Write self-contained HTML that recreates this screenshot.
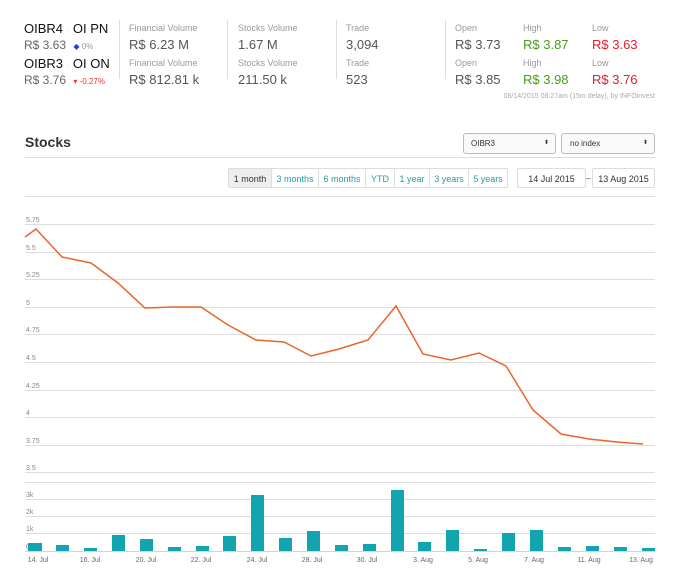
<!DOCTYPE html>
<html><head><style>
body{margin:0;background:#fff;width:673px;height:578px;overflow:hidden;font-family:"Liberation Sans",sans-serif;position:relative}
.a{position:absolute;white-space:nowrap}
.lb{font-size:9px;color:#999}
.v{font-size:13px;color:#555}
.dv{position:absolute;width:1px;background:#ddd;top:20px;height:59px}
.btn{position:absolute;top:168px;height:20px;border:1px solid #ddd;font-size:9px;color:#2a9aa8;line-height:20px;text-align:center;box-sizing:border-box}
</style></head><body>
<div class="a" style="left:24px;top:21px;font-size:13px;color:#111">OIBR4 <span style="color:#bbb;font-size:8px">·</span> OI PN</div>
<div class="a" style="left:24px;top:38px;font-size:12px;color:#666">R$ 3.63 <span style="font-size:8px;color:#999;margin-left:4px"><span style="color:#1a44e0">◆</span> 0%</span></div>
<div class="a" style="left:24px;top:56px;font-size:13px;color:#111">OIBR3 <span style="color:#bbb;font-size:8px">·</span> OI ON</div>
<div class="a" style="left:24px;top:73px;font-size:12px;color:#666">R$ 3.76 <span style="font-size:8px;color:#e33;margin-left:4px">▾ -0.27%</span></div>
<div class="dv" style="left:119px"></div><div class="dv" style="left:227px"></div><div class="dv" style="left:336px"></div><div class="dv" style="left:445px"></div>
<div class="a lb" style="left:129px;top:23px">Financial Volume</div><div class="a v" style="left:129px;top:37px">R$ 6.23 M</div>
<div class="a lb" style="left:129px;top:58px">Financial Volume</div><div class="a v" style="left:129px;top:72px">R$ 812.81 k</div>
<div class="a lb" style="left:238px;top:23px">Stocks Volume</div><div class="a v" style="left:238px;top:37px">1.67 M</div>
<div class="a lb" style="left:238px;top:58px">Stocks Volume</div><div class="a v" style="left:238px;top:72px">211.50 k</div>
<div class="a lb" style="left:346px;top:23px">Trade</div><div class="a v" style="left:346px;top:37px">3,094</div>
<div class="a lb" style="left:346px;top:58px">Trade</div><div class="a v" style="left:346px;top:72px">523</div>
<div class="a lb" style="left:455px;top:23px">Open</div><div class="a v" style="left:455px;top:37px">R$ 3.73</div>
<div class="a lb" style="left:455px;top:58px">Open</div><div class="a v" style="left:455px;top:72px">R$ 3.85</div>
<div class="a lb" style="left:523px;top:23px">High</div><div class="a v" style="left:523px;top:37px;color:#4a9a1e">R$ 3.87</div>
<div class="a lb" style="left:523px;top:58px">High</div><div class="a v" style="left:523px;top:72px;color:#4a9a1e">R$ 3.98</div>
<div class="a lb" style="left:592px;top:23px">Low</div><div class="a v" style="left:592px;top:37px;color:#e0202a">R$ 3.63</div>
<div class="a lb" style="left:592px;top:58px">Low</div><div class="a v" style="left:592px;top:72px;color:#e0202a">R$ 3.76</div>
<div class="a" style="right:18px;top:93px;font-size:7px;color:#aaa">08/14/2015 08:27am (15m delay), by INFOinvest</div>
<div class="a" style="left:25px;top:134px;font-size:14px;font-weight:bold;color:#333">Stocks</div>
<div class="a" style="left:463px;top:133px;width:93px;height:21px;border:1px solid #bbb;border-radius:3px;box-sizing:border-box;font-size:8px;color:#333;line-height:19px;padding-left:7px;background:#fafafa">OIBR3<span style="position:absolute;right:6px;font-size:6px">⬍</span></div>
<div class="a" style="left:561px;top:133px;width:94px;height:21px;border:1px solid #bbb;border-radius:3px;box-sizing:border-box;font-size:8px;color:#333;line-height:19px;padding-left:8px;background:#fafafa">no index<span style="position:absolute;right:6px;font-size:6px">⬍</span></div>
<div class="a" style="left:25px;top:157px;width:630px;height:1px;background:#ddd"></div>
<div class="a" style="left:25px;top:196px;width:630px;height:1px;background:#ddd"></div>
<div class="btn" style="left:228px;width:44px;background:#eee;color:#333;border-radius:2px 0 0 2px">1 month</div>
<div class="btn" style="left:271px;width:48px">3 months</div>
<div class="btn" style="left:318px;width:48px">6 months</div>
<div class="btn" style="left:365px;width:30px">YTD</div>
<div class="btn" style="left:394px;width:36px">1 year</div>
<div class="btn" style="left:429px;width:40px">3 years</div>
<div class="btn" style="left:468px;width:40px">5 years</div>
<div class="btn" style="left:517px;width:69px;color:#333;border-radius:2px">14 Jul 2015</div>
<div class="a" style="left:585px;top:173px;font-size:9px;color:#555;width:7px;text-align:center">–</div>
<div class="btn" style="left:592px;width:63px;color:#333;border-radius:2px">13 Aug 2015</div>
<svg class="a" style="left:0;top:0" width="673" height="578">
<g stroke="#ddd" stroke-width="1">
<line x1="25" x2="655" y1="224.5" y2="224.5"/><line x1="25" x2="655" y1="252.5" y2="252.5"/><line x1="25" x2="655" y1="279.5" y2="279.5"/><line x1="25" x2="655" y1="307.5" y2="307.5"/><line x1="25" x2="655" y1="334.5" y2="334.5"/><line x1="25" x2="655" y1="362.5" y2="362.5"/><line x1="25" x2="655" y1="390.5" y2="390.5"/><line x1="25" x2="655" y1="417.5" y2="417.5"/><line x1="25" x2="655" y1="445.5" y2="445.5"/><line x1="25" x2="655" y1="472.5" y2="472.5"/>
<line x1="25" x2="655" y1="482.5" y2="482.5"/><line x1="25" x2="655" y1="499.5" y2="499.5"/><line x1="25" x2="655" y1="516.5" y2="516.5"/><line x1="25" x2="655" y1="533.5" y2="533.5"/>
</g>
<g font-size="7" fill="#888" font-family="Liberation Sans">
<text x="26" y="222">5.75</text><text x="26" y="250">5.5</text><text x="26" y="277">5.25</text><text x="26" y="305">5</text><text x="26" y="332">4.75</text><text x="26" y="360">4.5</text><text x="26" y="388">4.25</text><text x="26" y="415">4</text><text x="26" y="443">3.75</text><text x="26" y="470">3.5</text>
<text x="26" y="497">3k</text><text x="26" y="514">2k</text><text x="26" y="531">1k</text><text x="26" y="549">0k</text>
</g>
<polyline fill="none" stroke="#e8662a" stroke-width="1.5" points="25,237 36,229 62,257 91,263 118,283 145,308 173,307 201,307 228,325 256,340 284,342 311,356 339,349 368,340 396,306 423,354 451,360 479,353 506,366 533,410 561,434 589,439 617,442 643,444"/>
<g fill="#12a5b0">
<rect x="28" y="543" width="14" height="8"/><rect x="56" y="545" width="13" height="6"/><rect x="84" y="548" width="13" height="3"/><rect x="112" y="535" width="13" height="16"/><rect x="140" y="539" width="13" height="12"/><rect x="168" y="547" width="13" height="4"/><rect x="196" y="546" width="13" height="5"/><rect x="223" y="536" width="13" height="15"/><rect x="251" y="495" width="13" height="56"/><rect x="279" y="538" width="13" height="13"/><rect x="307" y="531" width="13" height="20"/><rect x="335" y="545" width="13" height="6"/><rect x="363" y="544" width="13" height="7"/><rect x="391" y="490" width="13" height="61"/><rect x="418" y="542" width="13" height="9"/><rect x="446" y="530" width="13" height="21"/><rect x="474" y="549" width="13" height="2"/><rect x="502" y="533" width="13" height="18"/><rect x="530" y="530" width="13" height="21"/><rect x="558" y="547" width="13" height="4"/><rect x="586" y="546" width="13" height="5"/><rect x="614" y="547" width="13" height="4"/><rect x="642" y="548" width="13" height="3"/>
</g>
<line x1="25" x2="655" y1="551.5" y2="551.5" stroke="#ccd6eb" stroke-width="1"/>
<g font-size="7" fill="#666" font-family="Liberation Sans" text-anchor="middle">
<text x="38" y="562">14. Jul</text><text x="90" y="562">16. Jul</text><text x="146" y="562">20. Jul</text><text x="201" y="562">22. Jul</text><text x="257" y="562">24. Jul</text><text x="312" y="562">28. Jul</text><text x="367" y="562">30. Jul</text><text x="423" y="562">3. Aug</text><text x="478" y="562">5. Aug</text><text x="534" y="562">7. Aug</text><text x="589" y="562">11. Aug</text><text x="641" y="562">13. Aug</text>
</g>
</svg>
</body></html>
